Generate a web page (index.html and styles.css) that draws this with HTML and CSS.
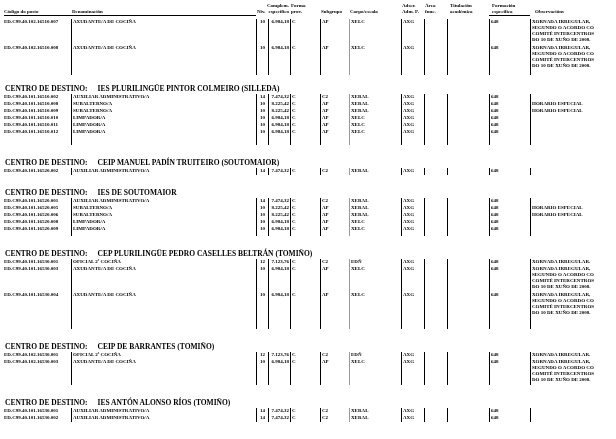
FILE: index.html
```html
<!DOCTYPE html>
<html lang="gl">
<head>
<meta charset="utf-8">
<title>Relación de postos</title>
<link rel="stylesheet" href="styles.css">
</head>
<body>
<div class="page">
  <div class="row hdr">
    <div class="ul">Código do posto</div>
    <div class="ul">Denominación</div>
    <div class="h-niv">Niv.</div>
    <div class="h-comp"><span>Complem.</span><span>específico</span></div>
    <div>Forma<br>prov.</div>
    <div>Subgrupo</div>
    <div>Corpo/escala</div>
    <div>Adscr.<br>Adm. P.</div>
    <div>Área<br>func.</div>
    <div class="h-tit">Titulación<br>académica</div>
    <div class="ul h-form">Formación<br>específica</div>
    <div class="h-obs">Observacións</div>
  </div>

  <div class="table">
    <div class="row data tall">
      <div>ED.C99.40.102.16510.007</div><div>AXUDANTE/A DE COCIÑA</div><div class="c3">10</div><div class="c4">6.984,18</div><div>C</div><div>AP</div><div class="c7">XELC</div><div>AXG</div><div></div><div></div><div>648</div><div>XORNADA IRREGULAR,<br>SEGUNDO O ACORDO CO<br>COMITÉ INTERCENTROS<br>DO 10 DE XUÑO DE 2008.</div>
    </div>
    <div class="row data tall">
      <div>ED.C99.40.102.16510.008</div><div>AXUDANTE/A DE COCIÑA</div><div class="c3">10</div><div class="c4">6.984,18</div><div>C</div><div>AP</div><div class="c7">XELC</div><div>AXG</div><div></div><div></div><div>648</div><div>XORNADA IRREGULAR,<br>SEGUNDO O ACORDO CO<br>COMITÉ INTERCENTROS<br>DO 10 DE XUÑO DE 2008.</div>
    </div>
    <div class="row data fill-t"><div></div><div></div><div></div><div></div><div></div><div></div><div class="c7"></div><div></div><div></div><div></div><div></div><div></div></div>
  </div>

  <h2 class="centro first">CENTRO DE DESTINO:<span class="nome">IES PLURILINGÜE PINTOR COLMEIRO (SILLEDA)</span></h2>
  <div class="table">
    <div class="row data"><div>ED.C99.40.101.16510.002</div><div>AUXILIAR ADMINISTRATIVO/A</div><div class="c3">14</div><div class="c4">7.474,32</div><div>C</div><div>C2</div><div class="c7">XERAL</div><div>AXG</div><div></div><div></div><div>648</div><div></div></div>
    <div class="row data"><div>ED.C99.40.101.16510.008</div><div>SUBALTERNO/A</div><div class="c3">10</div><div class="c4">8.225,42</div><div>C</div><div>AP</div><div class="c7">XERAL</div><div>AXG</div><div></div><div></div><div>648</div><div>HORARIO ESPECIAL</div></div>
    <div class="row data"><div>ED.C99.40.101.16510.009</div><div>SUBALTERNO/A</div><div class="c3">10</div><div class="c4">8.225,42</div><div>C</div><div>AP</div><div class="c7">XERAL</div><div>AXG</div><div></div><div></div><div>648</div><div>HORARIO ESPECIAL</div></div>
    <div class="row data"><div>ED.C99.40.101.16510.010</div><div>LIMPADOR/A</div><div class="c3">10</div><div class="c4">6.984,18</div><div>C</div><div>AP</div><div class="c7">XELC</div><div>AXG</div><div></div><div></div><div>648</div><div></div></div>
    <div class="row data"><div>ED.C99.40.101.16510.011</div><div>LIMPADOR/A</div><div class="c3">10</div><div class="c4">6.984,18</div><div>C</div><div>AP</div><div class="c7">XELC</div><div>AXG</div><div></div><div></div><div>648</div><div></div></div>
    <div class="row data"><div>ED.C99.40.101.16510.012</div><div>LIMPADOR/A</div><div class="c3">10</div><div class="c4">6.984,18</div><div>C</div><div>AP</div><div class="c7">XELC</div><div>AXG</div><div></div><div></div><div>648</div><div></div></div>
    <div class="row data fill-l"><div></div><div></div><div></div><div></div><div></div><div></div><div class="c7"></div><div></div><div></div><div></div><div></div><div></div></div>
  </div>

  <h2 class="centro">CENTRO DE DESTINO:<span class="nome">CEIP MANUEL PADÍN TRUITEIRO (SOUTOMAIOR)</span></h2>
  <div class="table">
    <div class="row data"><div>ED.C99.40.101.16520.002</div><div>AUXILIAR ADMINISTRATIVO/A</div><div class="c3">14</div><div class="c4">7.474,32</div><div>C</div><div>C2</div><div class="c7">XERAL</div><div>AXG</div><div></div><div></div><div>648</div><div></div></div>
  </div>

  <h2 class="centro">CENTRO DE DESTINO:<span class="nome">IES DE SOUTOMAIOR</span></h2>
  <div class="table">
    <div class="row data"><div>ED.C99.40.101.16520.001</div><div>AUXILIAR ADMINISTRATIVO/A</div><div class="c3">14</div><div class="c4">7.474,32</div><div>C</div><div>C2</div><div class="c7">XERAL</div><div>AXG</div><div></div><div></div><div>648</div><div></div></div>
    <div class="row data"><div>ED.C99.40.101.16520.005</div><div>SUBALTERNO/A</div><div class="c3">10</div><div class="c4">8.225,42</div><div>C</div><div>AP</div><div class="c7">XERAL</div><div>AXG</div><div></div><div></div><div>648</div><div>HORARIO ESPECIAL</div></div>
    <div class="row data"><div>ED.C99.40.101.16520.006</div><div>SUBALTERNO/A</div><div class="c3">10</div><div class="c4">8.225,42</div><div>C</div><div>AP</div><div class="c7">XERAL</div><div>AXG</div><div></div><div></div><div>648</div><div>HORARIO ESPECIAL</div></div>
    <div class="row data"><div>ED.C99.40.101.16520.008</div><div>LIMPADOR/A</div><div class="c3">10</div><div class="c4">6.984,18</div><div>C</div><div>AP</div><div class="c7">XELC</div><div>AXG</div><div></div><div></div><div>648</div><div></div></div>
    <div class="row data"><div>ED.C99.40.101.16520.009</div><div>LIMPADOR/A</div><div class="c3">10</div><div class="c4">6.984,18</div><div>C</div><div>AP</div><div class="c7">XELC</div><div>AXG</div><div></div><div></div><div>648</div><div></div></div>
    <div class="row data fill-s"><div></div><div></div><div></div><div></div><div></div><div></div><div class="c7"></div><div></div><div></div><div></div><div></div><div></div></div>
  </div>

  <h2 class="centro">CENTRO DE DESTINO:<span class="nome">CEP PLURILINGÜE PEDRO CASELLES BELTRÁN (TOMIÑO)</span></h2>
  <div class="table">
    <div class="row data"><div>ED.C99.40.101.16530.001</div><div>OFICIAL 2ª COCIÑA</div><div class="c3">12</div><div class="c4">7.123,76</div><div>C</div><div>C2</div><div class="c7">EDÑ</div><div>AXG</div><div></div><div></div><div>648</div><div>XORNADA IRREGULAR.</div></div>
    <div class="row data tall"><div>ED.C99.40.101.16530.003</div><div>AXUDANTE/A DE COCIÑA</div><div class="c3">10</div><div class="c4">6.984,18</div><div>C</div><div>AP</div><div class="c7">XELC</div><div>AXG</div><div></div><div></div><div>648</div><div>XORNADA IRREGULAR,<br>SEGUNDO O ACORDO CO<br>COMITÉ INTERCENTROS<br>DO 10 DE XUÑO DE 2008.</div></div>
    <div class="row data tall"><div>ED.C99.40.101.16530.004</div><div>AXUDANTE/A DE COCIÑA</div><div class="c3">10</div><div class="c4">6.984,18</div><div>C</div><div>AP</div><div class="c7">XELC</div><div>AXG</div><div></div><div></div><div>648</div><div>XORNADA IRREGULAR,<br>SEGUNDO O ACORDO CO<br>COMITÉ INTERCENTROS<br>DO 10 DE XUÑO DE 2008.</div></div>
    <div class="row data fill-m"><div></div><div></div><div></div><div></div><div></div><div></div><div class="c7"></div><div></div><div></div><div></div><div></div><div></div></div>
  </div>

  <h2 class="centro">CENTRO DE DESTINO:<span class="nome">CEIP DE BARRANTES (TOMIÑO)</span></h2>
  <div class="table">
    <div class="row data"><div>ED.C99.40.102.16530.001</div><div>OFICIAL 2ª COCIÑA</div><div class="c3">12</div><div class="c4">7.123,76</div><div>C</div><div>C2</div><div class="c7">EDÑ</div><div>AXG</div><div></div><div></div><div>648</div><div>XORNADA IRREGULAR.</div></div>
    <div class="row data tall"><div>ED.C99.40.102.16530.003</div><div>AXUDANTE/A DE COCIÑA</div><div class="c3">10</div><div class="c4">6.984,18</div><div>C</div><div>AP</div><div class="c7">XELC</div><div>AXG</div><div></div><div></div><div>648</div><div>XORNADA IRREGULAR,<br>SEGUNDO O ACORDO CO<br>COMITÉ INTERCENTROS<br>DO 10 DE XUÑO DE 2008.</div></div>
  </div>

  <h2 class="centro">CENTRO DE DESTINO:<span class="nome">IES ANTÓN ALONSO RÍOS (TOMIÑO)</span></h2>
  <div class="table">
    <div class="row data"><div>ED.C99.40.101.16530.001</div><div>AUXILIAR ADMINISTRATIVO/A</div><div class="c3">14</div><div class="c4">7.474,32</div><div>C</div><div>C2</div><div class="c7">XERAL</div><div>AXG</div><div></div><div></div><div>648</div><div></div></div>
    <div class="row data"><div>ED.C99.40.101.16530.002</div><div>AUXILIAR ADMINISTRATIVO/A</div><div class="c3">14</div><div class="c4">7.474,32</div><div>C</div><div>C2</div><div class="c7">XERAL</div><div>AXG</div><div></div><div></div><div>648</div><div></div></div>
  </div>
</div>
</body>
</html>
```

FILE: styles.css
```css
html, body {
  margin: 0;
  padding: 0;
  background: #fff;
}

body {
  font-family: "Liberation Serif", "Times New Roman", Times, "DejaVu Serif", serif;
  font-weight: bold;
  color: #000;
}

.page {
  padding: 3px 0 0 4px;
  filter: grayscale(1);
}

.row {
  display: grid;
  grid-template-columns: 67px 185px 12px 22px 30px 29px 52px 23px 23px 42px 41px 76px;
}

.row > div {
  white-space: nowrap;
}

/* header */
.hdr {
  font-size: 5px;
  line-height: 6px;
  align-items: end;
  margin-bottom: 3px;
}

.hdr > div {
  border-bottom: 1px solid transparent;
  padding-left: 1px;
}

.hdr > div:first-child {
  padding-left: 0;
}

.hdr > .ul {
  border-bottom-color: #000;
}

.hdr > .h-comp {
  display: flex;
  flex-direction: column;
  align-items: flex-end;
  padding-left: 0;
  padding-right: 1px;
}

.hdr > .h-tit,
.hdr > .h-form {
  padding-left: 3px;
}

.hdr > .h-obs {
  padding-left: 5px;
}

/* data rows */
.data {
  font-size: 5px;
  line-height: 6px;
}

.data > div {
  border-left: 1px solid #000;
  padding: 0 0 1px 1px;
}

.data > div:first-child {
  border-left: 0;
  padding-left: 0;
}

.data > .c3 {
  text-align: center;
  padding-left: 0;
}

.data > .c4 {
  text-align: right;
  padding-right: 1px;
  padding-left: 0;
}

.data > .c7 {
  border-left-color: #9a9a9a;
}

.tall > div {
  padding-bottom: 2px;
}

.fill-t > div {
  height: 4px;
  padding: 0;
}

.fill-l > div {
  height: 9px;
  padding: 0;
}

.fill-m > div {
  height: 11px;
  padding: 0;
}

.fill-s > div {
  height: 3px;
  padding: 0;
}

/* section heading */
.centro {
  font-size: 7.5px;
  line-height: 9px;
  font-weight: bold;
  margin: 13px 0 1px 1px;
  white-space: nowrap;
}

.centro.first {
  margin-top: 9px;
}

.centro .nome {
  margin-left: 10px;
}
```
